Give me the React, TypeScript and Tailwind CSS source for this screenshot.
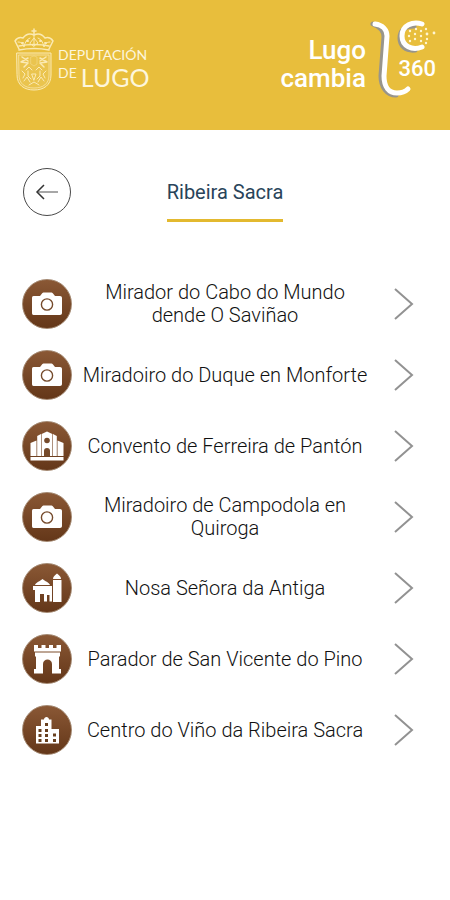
import type { ReactNode } from 'react';

type PlaceKind = 'camera' | 'church' | 'chapel' | 'castle' | 'building';

interface Place {
  id: string;
  name: string;
  kind: PlaceKind;
}

const places: Place[] = [
  { id: 'cabo-do-mundo', name: 'Mirador do Cabo do Mundo dende O Saviñao', kind: 'camera' },
  { id: 'duque', name: 'Miradoiro do Duque en Monforte', kind: 'camera' },
  { id: 'ferreira', name: 'Convento de Ferreira de Pantón', kind: 'church' },
  { id: 'campodola', name: 'Miradoiro de Campodola en Quiroga', kind: 'camera' },
  { id: 'antiga', name: 'Nosa Señora da Antiga', kind: 'chapel' },
  { id: 'parador', name: 'Parador de San Vicente do Pino', kind: 'castle' },
  { id: 'centro-vino', name: 'Centro do Viño da Ribeira Sacra', kind: 'building' },
];

// White shapes on the brown badge, drawn on a 50x50 grid
const glyphs: Record<PlaceKind, ReactNode> = {
  camera: (
    <>
      <path
        fill="#fff"
        d="M11.500 17H18l2-2.500c.6-.8 1.200-1 2-1h7c.8 0 1.400.2 2 1l2 2.500h5c1.200 0 2 .8 2 2v15c0 1.200-.8 2-2 2H11.500c-1 0-1.500-.8-1.500-2V19c0-1.200.5-2 1.500-2z"
      />
      <circle cx="25" cy="25.500" r="5.600" fill="none" stroke="#754a2b" strokeWidth="1.400" />
    </>
  ),
  church: (
    <>
      <path fill="#fff" d="M8.500 22l6-2.500V35h-6zM41.500 22l-6-2.500V35h6z" />
      <path fill="#fff" d="M15.200 15l3.800-2v22h-3.800zM34.800 15L31 13v22h3.800zM19.600 13L25 10.500l5.400 2.500v22H19.600z" />
      <path fill="#fff" d="M8.500 36h33v3.500h-33z" />
      <circle cx="25" cy="19.500" r="2.800" fill="#754a2b" />
      <path fill="#754a2b" d="M22 35.500V30a3 3 0 016 0v5.500z" />
    </>
  ),
  chapel: (
    <>
      <path fill="#fff" d="M31 16c0-2.500 2-3.500 4-5.500 2 2 4 3 4 5.500zM31 17h8.500v22H31z" />
      <path fill="#fff" d="M13 22c1-3 5-3.500 7.500-6 2.500 2.500 6.500 3 7.500 6zM11 23h19v4H11z" />
      <path fill="#fff" d="M13 26h17v12.500h-2.500V32h-2.500v6.500h-3V31h-4v8h-5z" />
    </>
  ),
  castle: (
    <>
      <path fill="#fff" d="M12 11h4v3h3.500v-3h4v3H27v-3h4v3h3.500v-3H39v6.500H12z" />
      <path fill="#fff" d="M13 18.500h25v4h-1V35h2v4.500h-9V30c0-6-9-6-9 0v9.500h-9V35h2V22.500h-1z" />
    </>
  ),
  building: (
    <>
      <path fill="#fff" d="M14 21h5v-6.500h3c0-3.500 5-3.500 5 0h2.500V24H37v14.500H14z" />
      <path
        fill="#68401f"
        d="M16.500 24h3v3h-3zM16.500 29h3v3h-3zM16.500 34h3v3h-3zM23 18h3v3h-3zM23 24h3v3h-3zM23 29h3v3h-3zM23 34h3v3h-3zM31 28.500h3v3h-3zM31 34h3v3h-3z"
      />
    </>
  ),
};

function PlaceIcon({ kind }: { kind: PlaceKind }) {
  return (
    <span className="size-[50px] shrink-0 rounded-full border border-[#a48972] bg-linear-to-b from-[#8a5835] to-[#643719]">
      <svg viewBox="1 1 48 48" className="size-full" aria-hidden="true">
        {glyphs[kind]}
      </svg>
    </span>
  );
}

function Crest() {
  return (
    <svg
      viewBox="0 0 40 64"
      className="h-16 w-10"
      fill="none"
      stroke="#fbeab4"
      strokeLinecap="round"
      strokeLinejoin="round"
      aria-hidden="true"
    >
      {/* Crown */}
      <path d="M20 1v5M18 3h4" strokeWidth="1.500" />
      <path d="M5 21L1 13c2-3 5-4 8-3 3-4 7-5 11-3 4-2 8-1 11 3 3-1 6 0 8 3l-4 8" strokeWidth="1.500" />
      <path d="M4 14c4 0 5 2 6 5 1-5 3-8 6-9M36 14c-4 0-5 2-6 5-1-5-3-8-6-9M20 7v11M16 15l4-5 4 5-4 3z" />
      <path d="M5 18c10-2 20-2 30 0M5 22c10-2 20-2 30 0" strokeWidth="1.500" />
      <path d="M8 15h1M13 13h1M26 13h1M31 15h1" strokeWidth="2" />
      {/* Shield */}
      <path d="M3 25h34v22c0 10-7 15-17 15S3 57 3 47z" fill="#fbeab4" fillOpacity=".15" />
      <path d="M5 27h30v20c0 9-6 13-15 13S5 56 5 47z" strokeWidth=".7" />
      <path d="M8 29l6 4M14 30l-7 4 7 1-4 4M32 29l-6 4M26 30l7 4-7 1 4 4" strokeWidth="1.500" />
      <path d="M17 29l3-1 3 1v7l-3 2-3-2z" strokeWidth=".7" opacity=".5" />
      <path d="M12 42l3-3 3 3M22 42l3-3 3 3M14 43v5l3 3M26 43v5l-3 3M18 46h4l-2 6z" />
      <path d="M8 43l3 3-2 4M32 43l-3 3 2 4M10 53l3-4 3 5M24 54l3-5 3 4M15 57l5-3 5 3" />
    </svg>
  );
}

function LugoCambiaMark() {
  return (
    <svg viewBox="0 0 66 82" className="h-[82px] w-[66px]" fill="none" strokeLinecap="round" aria-hidden="true">
      <g stroke="#98958c" strokeWidth="5">
        <path d="M3 6c8 3 11 7 11 13l-3 39c0 11 6 19 15 19" />
        <path d="M44 8c-9 0-14 5-14 12 0 8 6 13 15 12" />
      </g>
      <g stroke="#fff" strokeWidth="5">
        <path d="M5 6c8 1 12 6 12 12l-3 40c0 11 5 17 13 17 5 0 8-1 11-4" />
        <path d="M52 6c-9-3-20 1-20 12 0 10 10 15 20 11" />
      </g>
      <g fill="#fff5d2">
        <circle cx="46" cy="11" r="1.200" />
        <circle cx="51" cy="13" r="1.200" />
        <circle cx="56" cy="11" r="1.200" />
        <circle cx="40" cy="13" r="1.200" />
        <circle cx="45" cy="16" r="1.200" />
        <circle cx="51" cy="18" r="1.200" />
        <circle cx="57" cy="16" r="1.400" />
        <circle cx="64" cy="15" r="1.400" />
        <circle cx="39" cy="18" r="1.200" />
        <circle cx="45" cy="21" r="1.200" />
        <circle cx="51" cy="23" r="1.200" />
        <circle cx="57" cy="21" r="1.200" />
        <circle cx="40" cy="23" r="1.200" />
        <circle cx="56" cy="25" r="1.200" />
      </g>
    </svg>
  );
}

function Header() {
  return (
    <header className="flex h-[130px] items-start justify-between bg-[#e8be3c] px-3.5">
      <div className="mt-7 flex gap-1 font-['Lato',sans-serif] text-[#fdf6dc]">
        <Crest />
        <div className="mt-[19px]">
          <p className="text-sm leading-4">DEPUTACIÓN</p>
          <div className="flex gap-1">
            <span className="text-sm leading-5">DE</span>
            <span className="text-[25px] leading-7">LUGO</span>
          </div>
        </div>
      </div>
      <div className="mt-[18px] flex gap-1 font-['Roboto',sans-serif] font-medium text-white">
        <div className="mt-[18px] text-right text-[26px] leading-7">
          <p>Lugo</p>
          <p>cambia</p>
        </div>
        <div className="relative">
          <LugoCambiaMark />
          <span className="absolute top-[39px] right-0 text-[22px] leading-6">360</span>
        </div>
      </div>
    </header>
  );
}

function PlaceRow({ place }: { place: Place }) {
  return (
    <li>
      <button type="button" className="flex h-[50px] w-full items-center gap-2">
        <PlaceIcon kind={place.kind} />
        <span className="flex-1 text-center text-xl leading-[23px] font-light">{place.name}</span>
        <svg viewBox="0 0 20 34" className="ml-4 h-[34px] w-5 shrink-0" fill="none" aria-hidden="true">
          <path d="M1 2l17 15L1 32" stroke="#929292" strokeWidth="2" />
        </svg>
      </button>
    </li>
  );
}

export default function App() {
  return (
    <div className="min-h-screen bg-white font-['Roboto',sans-serif] text-[#111]">
      <Header />
      <main>
        <div className="grid grid-cols-[48px_1fr_48px] items-start px-[23px] pt-[38px]">
          <button
            type="button"
            aria-label="Volver"
            className="flex size-12 items-center justify-center rounded-full border border-[#4a4a4a]"
          >
            <svg viewBox="0 0 24 16" className="h-4 w-6" fill="none" aria-hidden="true">
              <path d="M2 8h21" stroke="#8a8a8a" strokeWidth="1.500" />
              <path d="M9 1L2 8l7 7" stroke="#333" strokeWidth="1.500" />
            </svg>
          </button>
          <h1 className="mt-2 justify-self-center border-b-3 border-[#e3b92f] pb-[11px] text-xl leading-8 text-[#29445a]">
            Ribeira Sacra
          </h1>
        </div>
        <ul className="mt-[57px] flex flex-col gap-[21px] pr-9 pl-[22px]">
          {places.map(place => (
            <PlaceRow key={place.id} place={place} />
          ))}
        </ul>
      </main>
    </div>
  );
}
